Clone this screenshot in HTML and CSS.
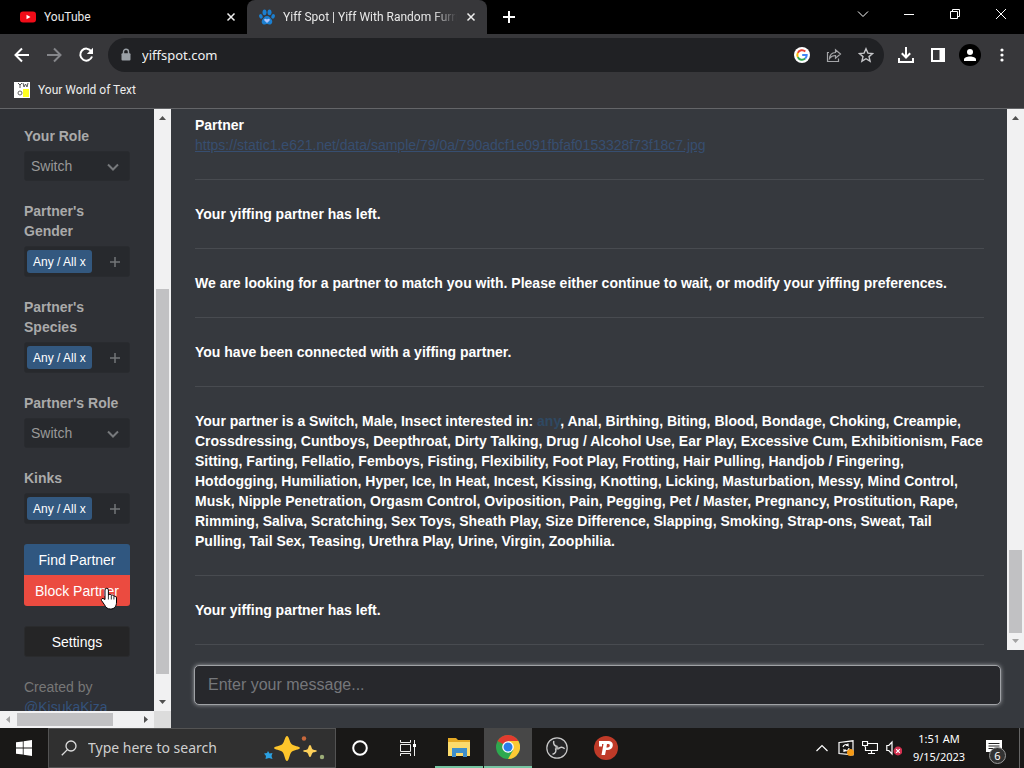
FILE: index.html
```html
<!DOCTYPE html>
<html lang="en">
<head>
<meta charset="utf-8">
<title>Yiff Spot | Yiff With Random Furries</title>
<link rel="stylesheet" href="styles.css">
</head>
<body>
<div class="desktop">
  <header class="tabstrip">
    <div class="tab">
      <svg class="favicon" viewBox="0 0 16 16"><rect y="2.500" width="16" height="11" rx="3" fill="#f00c18"/><path d="M6.500 5.700v4.600l4-2.300z" fill="#fff"/></svg>
      <span class="tab-title">YouTube</span>
      <button class="tab-close" aria-label="Close tab"><svg viewBox="0 0 10 10"><path d="M1.500 1.500l7 7m0-7l-7 7"/></svg></button>
    </div>
    <div class="tab tab-active">
      <svg class="favicon" viewBox="0 0 16 16"><g fill="#1b7fd0"><ellipse cx="5.500" cy="3.300" rx="2" ry="2.900"/><ellipse cx="10.500" cy="3.300" rx="2" ry="2.900"/><ellipse cx="1.900" cy="7.400" rx="1.700" ry="2.300" transform="rotate(-20 1.900 7.400)"/><ellipse cx="14.100" cy="7.400" rx="1.700" ry="2.300" transform="rotate(20 14.100 7.400)"/><path d="M8 7c2.300 0 3.300 2 4.400 3.300 1.500 1.800 1 4.800-1.200 5.200-1.300.2-2-.5-3.200-.5s-1.900.7-3.200.5c-2.200-.4-2.700-3.400-1.200-5.200C4.700 9 5.700 7 8 7z"/></g><path d="M8 14l-2.600-2.500c-1-1.400 1.200-2.600 2.600-1 1.400-1.600 3.600-.4 2.600 1z" fill="#a9c4ff"/></svg>
      <span class="tab-title tab-fade">Yiff Spot | Yiff With Random Furries</span>
      <button class="tab-close" aria-label="Close tab"><svg viewBox="0 0 10 10"><path d="M1.500 1.500l7 7m0-7l-7 7"/></svg></button>
    </div>
    <button class="new-tab" aria-label="New tab"><svg viewBox="0 0 14 14"><path d="M7 1v12M1 7h12"/></svg></button>
    <div class="window-controls">
      <button aria-label="Search tabs"><svg viewBox="0 0 12 12"><path d="M1 3.500l5 5 5-5"/></svg></button>
      <button aria-label="Minimize"><svg viewBox="0 0 12 12"><path d="M1 6.500h10"/></svg></button>
      <button aria-label="Restore"><svg viewBox="0 0 12 12"><path d="M1.500 3.500h7v7h-7zM3.500 3.500v-2h7v7h-2"/></svg></button>
      <button aria-label="Close"><svg viewBox="0 0 12 12"><path d="M1 1l10 10M11 1L1 11"/></svg></button>
    </div>
  </header>

  <div class="toolbar">
    <nav class="tool-group">
      <button class="tool" aria-label="Back"><svg viewBox="0 0 16 16"><path d="M15 8H2M8 1.500L1.500 8 8 14.500" stroke="#fff" stroke-width="2"/></svg></button>
      <button class="tool" aria-label="Forward"><svg viewBox="0 0 16 16"><path d="M1 8h13M8 1.500L14.500 8 8 14.500" stroke="#85868a" stroke-width="2"/></svg></button>
      <button class="tool" aria-label="Reload"><svg viewBox="0 0 16 16"><path d="M13.300 4.300A6 6 0 1 0 14 9.500" stroke="#fff" stroke-width="2"/><path d="M15 .8V7H8.800z" fill="#fff"/></svg></button>
    </nav>
    <div class="omnibox">
      <svg class="lock" viewBox="0 0 10 14"><path d="M2.500 6V3.800a2.500 2.500 0 0 1 5 0V6" fill="none" stroke="#9aa0a6" stroke-width="1.400"/><rect x=".5" y="5.300" width="9" height="7.200" rx="1" fill="#9aa0a6"/></svg>
      <input class="address" type="text" value="yiffspot.com" aria-label="Address">
      <button class="tool" aria-label="Google"><svg viewBox="0 0 16 16"><circle cx="8" cy="8" r="8" fill="#fff"/><g fill="none" stroke-width="2"><path d="M11.300 4.500A4.700 4.700 0 0 0 3.800 5.900" stroke="#ea4335"/><path d="M3.800 5.900a4.700 4.700 0 0 0 0 4.200" stroke="#fbbc05"/><path d="M3.800 10.100a4.700 4.700 0 0 0 7.400 1.500" stroke="#34a853"/><path d="M11.200 11.600A4.700 4.700 0 0 0 12.700 8H8.200" stroke="#4285f4"/></g></svg></button>
      <button class="tool" aria-label="Share"><svg viewBox="0 0 16 16"><path d="M3 5.500H1.500v9h11v-3M3.500 11.500c.3-3.700 2.300-5.800 6-6V2.700l5 4.300-5 4.300V8.500c-2.500 0-4.400.7-6 3z" stroke="#a4a5a8" stroke-width="1.200"/></svg></button>
      <button class="tool" aria-label="Bookmark"><svg viewBox="0 0 16 16"><path d="M8 1.800l1.900 4.300 4.700.4L11 9.600l1.100 4.600L8 11.700l-4.100 2.500L5 9.600 1.400 6.500l4.700-.4z" stroke="#c4c5c8" stroke-width="1.400"/></svg></button>
    </div>
    <div class="tool-group">
      <button class="tool" aria-label="Downloads"><svg viewBox="0 0 16 16"><path d="M8 0v10M3.800 6.300L8 10.500l4.200-4.200M1 11v4h14v-4" stroke="#fff" stroke-width="2"/></svg></button>
      <button class="tool" aria-label="Side panel"><svg viewBox="0 0 16 16"><path d="M1 1h14v14H1zM3 3v10h6.500V3z" fill="#fff" fill-rule="evenodd"/></svg></button>
      <button class="tool" aria-label="Profile"><svg class="profile" viewBox="0 0 22 22"><circle cx="11" cy="11" r="11" fill="#000"/><circle cx="11" cy="8" r="3" fill="#fff"/><path d="M5 17v-1.500c0-4 12-4 12 0V17z" fill="#fff"/></svg></button>
      <button class="tool" aria-label="Menu"><svg viewBox="0 0 16 16"><g fill="#fff"><circle cx="8" cy="3" r="1.600"/><circle cx="8" cy="8" r="1.600"/><circle cx="8" cy="13" r="1.600"/></g></svg></button>
    </div>
  </div>

  <div class="bookmarks">
    <a class="bookmark" href="#">
      <svg viewBox="0 0 16 16"><path fill="#fff" d="M0 0h16v16H0z"/><path fill="#ff2" d="M9 7h6v8H9z"/><path d="M4 1l2 2 2-2M6 3v3M9 1l1 4 1.500-3L13 5l1-4" fill="none" stroke="#555"/><circle cx="6" cy="11" r="2" fill="none" stroke="#666"/></svg>
      <span>Your World of Text</span>
    </a>
  </div>

  <main class="page">
    <aside class="sidebar">
      <form class="preferences">
        <div class="field">
          <label for="role">Your Role</label>
          <div class="select-wrap"><select id="role"><option>Switch</option></select><svg viewBox="0 0 12 8"><path d="M1 1.500l5 5 5-5"/></svg></div>
        </div>
        <div class="field">
          <label for="gender">Partner's Gender</label>
          <div class="tags"><button class="tag" type="button">Any / All x</button><button class="add" id="gender" type="button"><svg viewBox="0 0 10 10"><path d="M5 0v10M0 5h10"/></svg></button></div>
        </div>
        <div class="field">
          <label for="species">Partner's Species</label>
          <div class="tags"><button class="tag" type="button">Any / All x</button><button class="add" id="species" type="button"><svg viewBox="0 0 10 10"><path d="M5 0v10M0 5h10"/></svg></button></div>
        </div>
        <div class="field">
          <label for="partner-role">Partner's Role</label>
          <div class="select-wrap"><select id="partner-role"><option>Switch</option></select><svg viewBox="0 0 12 8"><path d="M1 1.500l5 5 5-5"/></svg></div>
        </div>
        <div class="field">
          <label for="kinks">Kinks</label>
          <div class="tags"><button class="tag" type="button">Any / All x</button><button class="add" id="kinks" type="button"><svg viewBox="0 0 10 10"><path d="M5 0v10M0 5h10"/></svg></button></div>
        </div>
        <div class="actions">
          <button class="btn btn-find" type="button">Find Partner</button>
          <button class="btn btn-block" type="button">Block Partner
            <svg class="cursor" viewBox="0 0 18 23"><path d="M5 12.500V3a1.700 1.700 0 0 1 3.400 0v5c.8-1 2.500-.8 2.900.4 1-.7 2.300-.2 2.600.9 1.200-.5 2.600.2 2.600 1.700V15c0 4.400-2 7-6 7-3.300 0-4.500-1.500-6-4.200L1.500 13.500c-.8-1.800 1.300-2.700 2.400-1.600z" fill="#fff" stroke="#000"/><path d="M8.400 8v4.500M11.300 9v3.500M13.900 9.500v3" stroke="#000" stroke-width=".8"/></svg>
          </button>
        </div>
        <button class="btn btn-settings" type="button">Settings</button>
        <p class="credit">Created by <a href="#">@KisukaKiza</a></p>
      </form>
      <div class="scroll scroll-y" aria-hidden="true">
        <svg class="arrow" viewBox="0 0 17 17"><path d="M5 11l3.500-4L12 11z"/></svg>
        <div class="track track-side"><div class="thumb"></div></div>
        <svg class="arrow" viewBox="0 0 17 17"><path d="M5 6l3.500 4L12 6z"/></svg>
      </div>
      <div class="scroll scroll-x" aria-hidden="true">
        <svg class="arrow arrow-dim" viewBox="0 0 17 17"><path d="M10 5L6 8.500 10 12z"/></svg>
        <div class="track track-bottom"><div class="thumb"></div></div>
        <svg class="arrow" viewBox="0 0 17 17"><path d="M7 5l4 3.500L7 12z"/></svg>
      </div>
      <div class="corner"></div>
    </aside>

    <section class="chat">
      <div class="history">
        <div class="messages">
          <div class="message"><strong>Partner</strong><a class="shared" href="#">https://static1.e621.net/data/sample/79/0a/790adcf1e091fbfaf0153328f73f18c7.jpg</a></div>
          <div class="message"><strong>Your yiffing partner has left.</strong></div>
          <div class="message"><strong>We are looking for a partner to match you with. Please either continue to wait, or modify your yiffing preferences.</strong></div>
          <div class="message"><strong>You have been connected with a yiffing partner.</strong></div>
          <div class="message"><strong>Your partner is a Switch, Male, Insect interested in: <span class="match">any</span>, Anal, Birthing, Biting, Blood, Bondage, Choking, Creampie, Crossdressing, Cuntboys, Deepthroat, Dirty Talking, Drug / Alcohol Use, Ear Play, Excessive Cum, Exhibitionism, Face Sitting, Farting, Fellatio, Femboys, Fisting, Flexibility, Foot Play, Frotting, Hair Pulling, Handjob / Fingering, Hotdogging, Humiliation, Hyper, Ice, In Heat, Incest, Kissing, Knotting, Licking, Masturbation, Messy, Mind Control, Musk, Nipple Penetration, Orgasm Control, Oviposition, Pain, Pegging, Pet / Master, Pregnancy, Prostitution, Rape, Rimming, Saliva, Scratching, Sex Toys, Sheath Play, Size Difference, Slapping, Smoking, Strap-ons, Sweat, Tail Pulling, Tail Sex, Teasing, Urethra Play, Urine, Virgin, Zoophilia.</strong></div>
          <div class="message"><strong>Your yiffing partner has left.</strong></div>
        </div>
        <div class="scroll scroll-y" aria-hidden="true">
          <svg class="arrow" viewBox="0 0 17 17"><path d="M5 11l3.500-4L12 11z"/></svg>
          <div class="track track-chat"><div class="thumb"></div></div>
          <svg class="arrow arrow-dim" viewBox="0 0 17 17"><path d="M5 6l3.500 4L12 6z"/></svg>
        </div>
      </div>
      <div class="composer"><input type="text" placeholder="Enter your message..." aria-label="Message"></div>
    </section>
  </main>

  <footer class="taskbar">
    <button class="task" aria-label="Start"><svg class="i16" viewBox="0 0 16 16"><path d="M0 2.300l6.800-.9v6.100H0zM7.600 1.200L16 0v7.500H7.600zM0 8.400h6.800v6.200L0 13.700zM7.600 8.400H16V16l-8.400-1.200z" fill="#fff"/></svg></button>
    <label class="search">
      <svg class="i16" viewBox="0 0 16 16"><circle cx="10" cy="6" r="5" fill="none" stroke="#ddd" stroke-width="1.300"/><path d="M6.400 9.600L.8 15.200" stroke="#ddd" stroke-width="1.300"/></svg>
      <input type="text" placeholder="Type here to search" aria-label="Search">
      <svg class="sparkles" viewBox="0 0 64 26"><path d="M24 1c2 0 2.500 6 4.500 8s8.500 2.500 8.500 4-6.500 2-8.500 4-2.500 9-4.500 9-2.500-7-4.500-9-8.500-2.500-8.500-4 6.500-2 8.500-4S22 1 24 1z" fill="#fdc52b"/><path d="M47 10c1.200 0 1.500 3.400 2.500 4.200s4.500.8 4.500 1.800-3.500 1-4.500 1.900S48.200 22 47 22s-1.500-3.200-2.500-4.100S40 17 40 16s3.500-1 4.500-1.800S45.800 10 47 10z" fill="#fdd05a"/><path d="M5 16l1.500 2.500L9.500 18 8.500 21l1 3L6 23l-3.500 1 .5-3-2-2.500 3-.5z" fill="#2ba1e2"/><circle cx="41" cy="3.500" r="2.200" fill="#c8683c"/><circle cx="59" cy="22" r="2.200" fill="#9cad78"/></svg>
    </label>
    <button class="task" aria-label="Cortana"><svg class="i16" viewBox="0 0 16 16"><circle cx="8" cy="8" r="6.800" fill="none" stroke="#fff" stroke-width="2"/></svg></button>
    <button class="task" aria-label="Task view"><svg class="i16" viewBox="0 0 16 16"><path d="M.5 0v2.500h10V0M.5 16v-2.500h10V16M.5 4.500h10v7H.5zM14.500 0v16" fill="none" stroke="#eee"/><path d="M13 4h3v3h-3z" fill="#fff"/></svg></button>
    <div class="apps">
      <button class="task running" aria-label="File Explorer"><svg class="i22" viewBox="0 0 22 20"><path d="M0 1h8l2 2h12v16H0z" fill="#e5a924"/><path d="M0 5h22v14H0z" fill="#fcdb6c"/><path d="M4 11h15v9h-4v-4H8v4H4z" fill="#3e8fcb"/></svg></button>
      <button class="task running focused" aria-label="Chrome"><svg class="i24" viewBox="0 0 24 24"><circle cx="12" cy="12" r="12" fill="#2da94f"/><path d="M12 12L1.600 6A12 12 0 0 1 22.400 6z" fill="#e33b2e"/><path d="M12 6h10.400A12 12 0 0 1 12 24l5.200-9z" fill="#fcc934"/><path d="M1.600 6l5.200 9L12 12V6z" fill="#e33b2e"/><path d="M1.600 6l5.200 9 5 3L12 12z" fill="#2da94f"/><circle cx="12" cy="12" r="5.800" fill="#fff"/><circle cx="12" cy="12" r="4.500" fill="#2a7de8"/></svg></button>
      <button class="task" aria-label="OBS Studio"><svg class="i22" viewBox="0 0 22 22"><circle cx="11" cy="11" r="10.200" fill="#242426" stroke="#c9c9c9" stroke-width="1.200"/><g fill="none" stroke="#ccc" stroke-width="1.500"><path d="M11.500 9.500c-3-.3-4.500-2.500-3.700-5.500"/><path d="M11.500 9.500c-3-.3-4.500-2.500-3.700-5.500" transform="rotate(120 11 11)"/><path d="M11.500 9.500c-3-.3-4.500-2.500-3.700-5.500" transform="rotate(240 11 11)"/></g><circle cx="11" cy="11" r="1.800" fill="#aaa"/></svg></button>
      <button class="task" aria-label="Psiphon"><svg class="i24" viewBox="0 0 24 24"><circle cx="12" cy="12" r="12" fill="#bf3a28"/><path d="M5 5h10c5.500 0 5 9-1 9h-2l-1 5H7.500l2-11H8v2.500H5zM13 8l-.6 3.500h1.400c2.400 0 2.600-3.500.7-3.500z" fill="#fff" fill-rule="evenodd"/></svg></button>
    </div>
    <div class="tray">
      <svg class="i16" viewBox="0 0 16 16"><path d="M2.500 11L8 5.500l5.500 5.500"/></svg>
      <svg class="i16" viewBox="0 0 16 16"><path d="M1 2.500L15 .8v14L1 13.500zM5 7a3 3 0 0 1 5-1.500V3.500M10 5.500H8M11 8a3 3 0 0 1-5 2v2M6 10h2"/><circle cx="12.500" cy="12.500" r="3.500" fill="#f59a16" stroke="none"/></svg>
      <svg class="i16" viewBox="0 0 16 16"><path d="M6 3.500h9.500v7H3.500V7M6 13.500h7M9.500 10.500v3M.5 1.500h5v4h-5zM3 5.500V7"/></svg>
      <svg class="i16" viewBox="0 0 16 16"><path d="M.8 5.500h2L6 2v12l-3.200-3.500h-2z"/><circle cx="12" cy="11" r="4.400" fill="#d4304f" stroke="none"/><path d="M10.200 9.200l3.600 3.600m0-3.600l-3.600 3.600"/></svg>
      <div class="clock"><span>1:51 AM</span><span>9/15/2023</span></div>
      <button class="notices" aria-label="Notifications"><svg class="i16" viewBox="0 0 16 16"><path d="M0 0h16v12H9l-4 4v-4H0z" fill="#fff"/><path d="M2.500 3.500h11M2.500 6h11M2.500 8.500h8" stroke="#222"/></svg><span class="badge">6</span></button>
    </div>
  </footer>
</div>
</body>
</html>
```
FILE: styles.css
```css
* { box-sizing: border-box; }
body { margin: 0; background: #35393d; font-family: "Liberation Sans", Arial, sans-serif; font-size: 14px; line-height: 20px; }
button, input, select { font: inherit; border: 0; padding: 0; margin: 0; color: inherit; background: none; outline: 0; }
button { cursor: pointer; }
svg { display: block; flex: none; }
.desktop { display: flex; flex-direction: column; height: 100vh; overflow: hidden; }

/* browser tabs */
.tabstrip { display: flex; flex: none; height: 34px; background: #000; color: #e8e8e8; font: 12px/16px Roboto, sans-serif; }
.tab { display: flex; align-items: center; flex: 0 1 247px; min-width: 0; gap: 8px; padding: 0 10px 0 20px; }
.tab-active { flex-basis: 240px; padding: 0 10px 0 12px; background: #37373a; border-radius: 8px 8px 0 0; }
.favicon { width: 16px; height: 16px; }
.tab-title { flex: 1; min-width: 0; overflow: hidden; white-space: nowrap; }
.tab-fade { mask-image: linear-gradient(90deg, #000 86%, transparent); }
.tab-close { display: grid; place-items: center; width: 12px; height: 16px; }
.tab-close svg { width: 10px; height: 10px; stroke: #eee; stroke-width: 1.5; }
.new-tab { display: grid; place-items: center; width: 44px; }
.new-tab svg { width: 14px; height: 14px; stroke: #fff; stroke-width: 2; }
.window-controls { display: flex; margin-left: auto; }
.window-controls button { display: grid; place-items: center; width: 46px; height: 28px; }
.window-controls svg { width: 12px; height: 12px; fill: none; stroke: #fff; }

/* address bar */
.toolbar { display: flex; align-items: center; flex: none; gap: 6px; height: 42px; padding: 0 6px; background: #37373a; }
.tool-group { display: flex; }
.tool { display: grid; place-items: center; width: 32px; height: 32px; }
.tool svg { width: 16px; height: 16px; fill: none; }
.tool .profile { width: 22px; height: 22px; }
.omnibox { display: flex; align-items: center; flex: 1; height: 34px; padding: 0 2px 0 13px; border-radius: 17px; background: #202124; color: #f1f1f1; font: 13px/20px "Noto Sans", sans-serif; }
.lock { width: 10px; height: 14px; margin-right: 11px; }
.address { flex: 1; min-width: 0; }
.bookmarks { display: flex; align-items: center; flex: none; height: 33px; padding: 0 14px 4px; background: #37373a; border-bottom: 1px solid #646568; }
.bookmark { display: flex; align-items: center; gap: 8px; color: #ececec; font: 12px/16px Roboto, sans-serif; text-decoration: none; }
.bookmark svg { width: 16px; height: 16px; }

/* page */
.page { display: flex; flex: 1; min-height: 0; }
.sidebar { display: grid; grid-template: minmax(0, 1fr) 17px / minmax(0, 1fr) 17px; flex: none; width: 171px; background: #2f3136; }
.preferences { display: flex; flex-direction: column; gap: 20px; overflow: hidden; padding: 17px 24px 0; color: #aaa; }
.field { display: flex; flex-direction: column; gap: 5px; flex: none; }
.field label { font-weight: bold; }
.select-wrap { position: relative; }
.select-wrap select { appearance: none; display: block; width: 100%; height: 30px; padding: 0 6px; border: 1px solid #292b2f; border-radius: 3px; background: #27292d; color: #999; }
.select-wrap svg { position: absolute; right: 11px; top: 12px; width: 12px; height: 8px; fill: none; stroke: #77797c; stroke-width: 2; pointer-events: none; }
.tags { display: flex; align-items: center; justify-content: space-between; height: 31px; padding: 0 9px 0 2px; border: 1px solid #292b2f; border-radius: 3px; background: #27292d; }
.tag { height: 23px; padding: 0 6px; border-radius: 3px; background: #33587f; color: #fff; font-size: 12px; white-space: nowrap; }
.add svg { width: 10px; height: 10px; stroke: #737578; stroke-width: 1.5; }
.actions { display: flex; flex-direction: column; flex: none; }
.btn { height: 31px; flex: none; color: #fff; }
.btn-find { border-radius: 3px 3px 0 0; background: #305780; }
.btn-block { position: relative; border-radius: 0 0 3px 3px; background: #eb4b40; }
.cursor { position: absolute; left: 76px; top: 12px; width: 18px; height: 23px; }
.btn-settings { border: 1px solid #2a2b2d; border-radius: 3px; background: #252526; }
.credit { margin: 0; color: #777; }
.credit a { color: #34517b; }

/* scrollbars */
.scroll { display: flex; background: #f1f1f2; }
.scroll-y { flex-direction: column; width: 17px; }
.scroll-x { height: 17px; }
.arrow { width: 17px; height: 17px; fill: #505050; }
.arrow-dim { fill: #a3a3a3; }
.track { display: grid; flex: 1; }
.thumb { background: #c1c1c3; }
.scroll-y .track { padding: 0 2px; }
.scroll-x .track { padding: 2px 0; }
.track-side { grid-template-rows: 163fr 385fr 20fr; }
.track-side .thumb { grid-row: 2; }
.track-bottom { grid-template-columns: 96fr 24fr; }
.track-chat { grid-template-rows: 424fr 83fr; }
.track-chat .thumb { grid-row: 2; }
.corner { background: #dcdcdc; }

/* chat */
.chat { display: flex; flex-direction: column; flex: 1; min-width: 0; background: #36393e; }
.history { display: flex; flex: 1; min-height: 0; }
.messages { flex: 1; min-width: 0; overflow: hidden; padding: 6px 23px 0 24px; color: #fff; }
.message { padding-bottom: 24px; margin-bottom: 24px; border-bottom: 1px solid #484b50; }
.message strong { display: block; }
.shared { color: #374e70; overflow-wrap: anywhere; }
.match { color: #2f4963; }
.composer { flex: none; padding: 15px 23px 23px; }
.composer input { display: block; width: 100%; height: 40px; padding: 0 13px; border: 1px solid #a0a2a6; border-radius: 5px; background: #27282c; box-shadow: 0 0 4px #a0a2a6; color: #ddd; font-size: 16px; }
.composer input::placeholder { color: #75777b; }

/* taskbar */
.taskbar { display: flex; flex: none; height: 40px; background: #191817; color: #fff; font-family: "Noto Sans", sans-serif; }
.task { display: grid; place-items: center; flex: none; width: 48px; height: 40px; }
.i16 { width: 16px; height: 16px; }
.i22 { width: 22px; height: 22px; }
.i24 { width: 24px; height: 24px; }
.search { display: flex; align-items: center; flex: 0 1 288px; min-width: 0; gap: 11px; padding: 0 8px 0 12px; background: #303030; border: 1px solid #535353; }
.search input { flex: 1; min-width: 0; font-size: 14px; }
.search input::placeholder { color: #cfcfcf; }
.sparkles { width: 64px; height: 26px; }
.apps { display: flex; gap: 1px; margin-left: 3px; }
.running { border-bottom: 2px solid #76c5a2; }
.focused { background: #474747; }
.tray { display: flex; align-items: center; flex: none; gap: 8px; margin-left: auto; padding-right: 4px; }
.tray > svg { fill: none; stroke: #fff; stroke-width: 1.2; }
.clock { display: flex; flex-direction: column; width: 58px; align-items: center; font-size: 11px; line-height: 18px; white-space: nowrap; }
.notices { position: relative; display: grid; place-items: center; width: 52px; height: 40px; margin-left: -8px; border-right: 1px solid #666; }
.badge { position: absolute; right: 13px; bottom: 4px; width: 17px; height: 17px; border: 1px solid #999; border-radius: 50%; background: #333; font-size: 11px; line-height: 15px; }
```
